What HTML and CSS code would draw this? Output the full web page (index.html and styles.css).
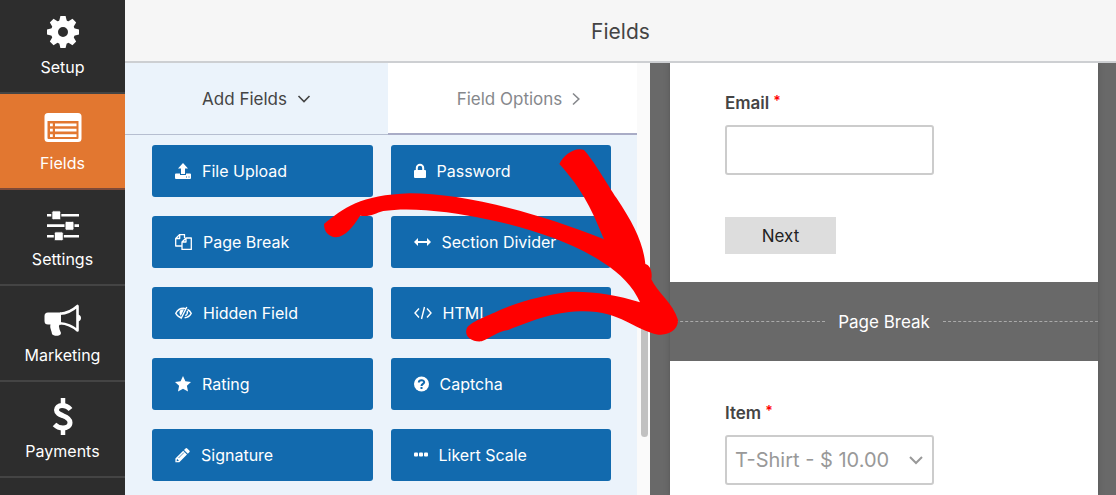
FILE: index.html
```html
<!DOCTYPE html>
<html lang="en">
<head>
<meta charset="utf-8">
<title>Fields</title>
<link rel="stylesheet" href="styles.css">
</head>
<body>
<div class="builder">
  <nav class="sidebar">
    <a class="nav-item" href="#setup">
      <svg class="nav-icon" viewBox="0 0 36 36"><g transform="translate(18 18)" fill="#fff"><circle r="8.5" fill="none" stroke="#fff" stroke-width="7"/><g id="teeth"><path d="M-3.8-11L-2.6-16H2.6L3.8-11z"/><path d="M-3.8-11L-2.6-16H2.6L3.8-11z" transform="rotate(90)"/><path d="M-3.8-11L-2.6-16H2.6L3.8-11z" transform="rotate(180)"/><path d="M-3.8-11L-2.6-16H2.6L3.8-11z" transform="rotate(270)"/></g><use href="#teeth" transform="rotate(45)"/></g></svg>
      <span>Setup</span>
    </a>
    <a class="nav-item active" href="#fields">
      <svg class="nav-icon" viewBox="0 0 38 36"><path fill="#fff" fill-rule="evenodd" d="M4 3H34a3.500 3.500 0 0 1 3.500 3.500V28.500A3.500 3.500 0 0 1 34 32H4A3.500 3.500 0 0 1 .5 28.500V6.500A3.500 3.500 0 0 1 4 3zM3.500 11V28a1 1 0 0 0 1 1H33.500a1 1 0 0 0 1-1V11z"/><path stroke="#fff" stroke-width="2.800" d="M6 14.800h2.800M11 14.800h21.500M6 20.200h2.800M11 20.200h21.500M6 25.600h2.800M11 25.600h21.500"/></svg>
      <span>Fields</span>
    </a>
    <a class="nav-item" href="#settings">
      <svg class="nav-icon" viewBox="0 0 36 36"><path stroke="#fff" stroke-width="2.600" d="M2 9.300h32M2 19.600h32M2 30.300h32"/><g fill="#fff" stroke="#2d2d2d"><rect x="6.800" y="4.800" width="9" height="9" rx="1.500"/><rect x="20" y="15.300" width="9" height="9" rx="1.500"/><rect x="9.300" y="25.800" width="9" height="9" rx="1.500"/></g></svg>
      <span>Settings</span>
    </a>
    <a class="nav-item" href="#marketing">
      <svg class="nav-icon" viewBox="0 0 38 36"><path fill="#fff" d="M4 10.500H17V22.500C15 22.500 14.500 24 15.300 26 15.500 29 18 30.500 16.500 32.500 14.500 34.500 9 34 8 32 7.500 28 5.500 26 6.500 22.500H4A3.500 3.500 0 0 1 .5 19V14A3.500 3.500 0 0 1 4 10.500z"/><path fill="none" stroke="#fff" stroke-width="2.600" stroke-linejoin="round" d="M16 11.800C23 11.500 29 8 33.500 4V28.500C29 24.500 23 21.500 16 21.200"/><path fill="#fff" d="M34 12.500c4 .5 4 6.500 0 7z"/></svg>
      <span>Marketing</span>
    </a>
    <a class="nav-item" href="#payments">
      <svg class="nav-icon" viewBox="0 0 36 36"><path fill="none" stroke="#fff" stroke-width="5" d="M25.500 11.500C23 8.500 20 7.500 17 7.500 13.500 7.500 11.500 9.500 11.500 12 11.500 15.200 14.500 16.300 18 17.700 22 19.200 25 20.700 25 24.500 25 28 22 30 18 30 14.500 30 12 29 9.500 26.500"/><path stroke="#fff" stroke-width="4.500" d="M18 0v8M18 29v8"/></svg>
      <span>Payments</span>
    </a>
    <div class="nav-item"></div>
  </nav>

  <div class="main">
    <header class="topbar"><h1>Fields</h1></header>
    <div class="workspace">
      <section class="panel">
        <div class="panel-body">
          <div class="tabs">
            <button class="tab current" type="button">Add Fields
              <svg class="chevron" viewBox="0 0 14 14"><path d="M1.500 4L7 9.500 12.500 4"/></svg>
            </button>
            <button class="tab" type="button">Field Options
              <svg class="chevron narrow" viewBox="0 0 8 14"><path d="M1 1.500L6.800 7 1 12.500"/></svg>
            </button>
          </div>
          <div class="field-grid">
            <button class="field" type="button"><svg class="w16" viewBox="0 0 16 16"><path fill="#fff" fill-rule="evenodd" d="M8 0L13 5.500H10V11H6V5.500H3zM1 10.500H5V12H11V10.500H15a1 1 0 0 1 1 1V15a1 1 0 0 1-1 1H1a1 1 0 0 1-1-1V11.500a1 1 0 0 1 1-1zM11 13.500v1h1v-1zM13.500 13.500v1h1v-1z"/></svg>File Upload</button>
            <button class="field" type="button"><svg class="w12" viewBox="0 0 12 16"><path fill="#fff" d="M1 7H11a1 1 0 0 1 1 1V14a1 1 0 0 1-1 1H1a1 1 0 0 1-1-1V8a1 1 0 0 1 1-1z"/><path fill="none" stroke="#fff" stroke-width="2" d="M2.800 7.500V5a3.200 3.200 0 0 1 6.400 0V7.500"/></svg>Password</button>
            <button class="field" type="button"><svg class="w17" viewBox="0 0 17 16"><path fill="none" stroke="#fff" stroke-width="1.300" stroke-linejoin="round" d="M7 12H.7V4.500L4.500.6H9.500V4M4.700.8V4.500H.9M11 4H16.300V15.400H7V8L11 4V8H7.200"/></svg>Page Break</button>
            <button class="field" type="button"><svg class="w17" viewBox="0 0 17 16"><path fill="#fff" d="M0 8L4 4V7H13V4L17 8 13 12V9H4V12z"/></svg>Section Divider</button>
            <button class="field" type="button"><svg class="w17" viewBox="0 0 17 16"><path fill="none" stroke="#fff" stroke-width="1.400" d="M7 12.700C4 12.300 2 10.500.8 8.300 2.500 5 5.300 3.300 8.500 3.300c.8 0 1.500.1 2.200.3M12.500 4.500c1.600.8 2.900 2 3.700 3.800-1.500 2.800-3.900 4.200-6.600 4.500M11.800 2L5.800 14M12.300 6c.5 2.300-.5 3.800-2 4.700"/><path fill="#fff" d="M9 4.300L5.800 11C4 9 4 6 6 4.500z"/></svg>Hidden Field</button>
            <button class="field" type="button"><svg class="w18" viewBox="0 0 18 16"><path fill="none" stroke="#fff" stroke-width="1.400" d="M5 3.500L1 8l4 4.500M13 3.500L17 8l-4 4.500M10.500 2L7.500 14"/></svg>HTML</button>
            <button class="field" type="button"><svg class="w16" viewBox="0 0 16 16"><path fill="#fff" d="M8 0l2.400 5.200 5.600.7-4.100 3.900 1.100 5.700L8 12.700l-5 2.800 1.100-5.700L0 5.900l5.600-.7z"/></svg>Rating</button>
            <button class="field" type="button"><svg class="w15" viewBox="0 0 15 16"><circle cx="7.500" cy="8" r="7.500" fill="#fff"/><path fill="none" stroke="#126aae" stroke-width="2" d="M4.800 6.500C5 3.500 10.200 3.600 10.200 6.200 10.200 8 7.500 7.800 7.500 10M7.500 11v2"/></svg>Captcha</button>
            <button class="field" type="button"><svg class="w15" viewBox="0 0 15 16"><path fill="#fff" fill-rule="evenodd" d="M10.500 1.500a1.200 1.200 0 0 1 1.700 0L14.300 3.600a1.200 1.200 0 0 1 0 1.700L12.800 6.800 9 3zM8.200 3.800L12 7.600 4.300 15.300H.4V11.500zM2 11.800L1.600 14.200 4 13.800z"/><path stroke="#126aae" stroke-width=".7" d="M3.500 11L9 5.500"/></svg>Signature</button>
            <button class="field" type="button"><svg class="w14" viewBox="0 0 14 16"><g fill="#fff"><rect y="5.500" width="4" height="4" rx="1"/><rect x="5" y="5.500" width="4" height="4" rx="1"/><rect x="10" y="5.500" width="4" height="4" rx="1"/></g></svg>Likert Scale</button>
          </div>
        </div>
        <div class="gutter"><div class="thumb"></div></div>
      </section>

      <main class="preview">
        <form class="form">
          <div class="form-page">
            <label for="email">Email<span class="required">*</span></label>
            <input class="control" id="email" type="text">
            <button class="next" type="button">Next</button>
          </div>
          <div class="page-break"><span>Page Break</span></div>
          <div class="form-page">
            <label for="item">Item<span class="required">*</span></label>
            <div class="select-wrap">
              <select class="control" id="item"><option>T-Shirt - $ 10.00</option></select>
              <svg class="select-arrow" viewBox="0 0 14 14"><path d="M1 4L7 10 13 4"/></svg>
            </div>
          </div>
        </form>
      </main>
    </div>
  </div>

  <svg class="annotation" viewBox="0 0 1200 630"><path fill="#f00" d="M72 252C130 205 180 165 330 160 480 160 700 212 912 298 880 220 850 150 778 72 790 45 825 20 852 30 880 60 920 130 950 175 1000 250 1030 310 1036 372 1050 375 1058 395 1054 418 1070 455 1120 490 1134 540 1134 575 1100 585 1075 584 1000 570 960 510 840 514 750 518 690 545 625 570 590 575 570 595 545 604 515 607 492 590 500 566 510 545 560 530 600 510 670 480 740 465 805 456 870 453 950 465 1020 487 1000 440 960 400 910 368 830 315 700 265 560 238 460 215 330 200 250 213 225 220 210 232 180 227 160 260 135 290 108 292 85 290 72 275 72 252z"/></svg>
</div>
</body>
</html>
```

FILE: styles.css
```css
* { box-sizing: border-box; }

body {
  margin: 0;
  font-family: Inter, "Liberation Sans", sans-serif;
  font-size: 17px;
  color: #444;
}

button, input, select { font: inherit; }

.builder {
  position: relative;
  display: flex;
  height: 100vh;
  overflow: hidden;
}

.sidebar {
  flex: 0 0 125px;
  margin-top: -2px;
  background: #2d2d2d;
}

.nav-item {
  display: flex;
  flex-direction: column;
  align-items: center;
  gap: 5px;
  height: 96px;
  padding-top: 16px;
  border-bottom: 2px solid #444;
  color: #fff;
  font-size: 16px;
  line-height: 24px;
  text-decoration: none;
}

.nav-item.active {
  background: #e27730;
  border-color: #7d4a38;
}

.nav-icon {
  width: 38px;
  height: 36px;
  overflow: visible;
}

.main {
  flex: 1;
  min-width: 0;
  display: flex;
  flex-direction: column;
}

.topbar {
  height: 63px;
  border-bottom: 2px solid #cdcfd2;
  background: #f6f6f6;
  text-align: center;
}

h1 {
  margin: 0;
  font-size: 21px;
  font-weight: 400;
  line-height: 63px;
}

.workspace {
  flex: 1;
  display: flex;
  min-height: 0;
}

.panel {
  flex: 0 0 525px;
  display: flex;
  overflow: hidden;
}

.panel-body {
  flex: 1;
  background: #ebf3fb;
}

.tabs {
  display: flex;
  height: 72px;
}

.tab {
  flex: 1;
  display: flex;
  align-items: center;
  justify-content: center;
  gap: 10px;
  padding: 2px 0 0 12px;
  border: 0;
  border-bottom: 2px solid #a9acc6;
  background: #fff;
  color: #86888c;
}

.tab.current {
  flex: 0 0 263px;
  padding: 1px 0 0;
  border-bottom: 1px solid #b6bed0;
  background: #ebf3fb;
  color: #444;
}

.chevron, .select-arrow {
  width: 14px;
  height: 14px;
  fill: none;
  stroke: currentColor;
  stroke-width: 1.6px;
}

.chevron.narrow { width: 8px; }

.field-grid {
  display: grid;
  grid-template-columns: 1fr 1fr;
  gap: 19px 18px;
  padding: 10px 26px 0 27px;
}

.field {
  display: flex;
  align-items: center;
  gap: 11px;
  height: 52px;
  padding: 0 0 0 23px;
  border: 0;
  border-radius: 3px;
  background: #126aae;
  color: #fff;
  font-size: 16px;
  white-space: nowrap;
}

.field svg { height: 16px; }
.w12 { width: 12px; }
.w14 { width: 14px; }
.w15 { width: 15px; }
.w16 { width: 16px; }
.w17 { width: 17px; }
.w18 { width: 18px; }

.gutter {
  flex: 0 0 13px;
  padding: 255px 2px 0 4px;
  background: #fafafa;
}

.thumb {
  height: 119px;
  border-radius: 4px;
  background: #c1c1c1;
}

.preview {
  flex: 1;
  min-width: 0;
  padding: 0 18px 0 20px;
  background: #696969;
  overflow: hidden;
}

.form {
  height: 100%;
  background: #fff;
  box-shadow: 0 0 5px #555;
}

.form-page {
  display: flex;
  flex-direction: column;
  align-items: flex-start;
  padding: 28px 55px;
}

label {
  display: flex;
  gap: 4px;
  margin-bottom: 10px;
  font-weight: 600;
  line-height: 24px;
}

.required {
  color: #f00;
  font-size: 14px;
  line-height: 20px;
}

.control {
  width: 209px;
  height: 50px;
  padding: 0 8px;
  border: 2px solid #ccc;
  border-radius: 3px;
  background: #fff;
}

.next {
  width: 111px;
  height: 37px;
  margin-top: 42px;
  border: 0;
  background: #ddd;
  color: #222;
}

.page-break {
  display: flex;
  align-items: center;
  gap: 13px;
  height: 79px;
  background: #696969;
  color: #fff;
}

.page-break::before, .page-break::after {
  content: "";
  flex: 1;
  border-top: 1px dashed #aaa;
}

.page-break + .form-page { padding-top: 40px; }

.select-wrap { position: relative; }

select.control {
  appearance: none;
  color: #999;
  font-size: 20px;
}

.select-arrow {
  position: absolute;
  top: 18px;
  right: 11px;
  color: #999;
  stroke-width: 2px;
}

.annotation {
  position: absolute;
  left: 300px;
  top: 140px;
  width: 400px;
  height: 210px;
  pointer-events: none;
}
```
